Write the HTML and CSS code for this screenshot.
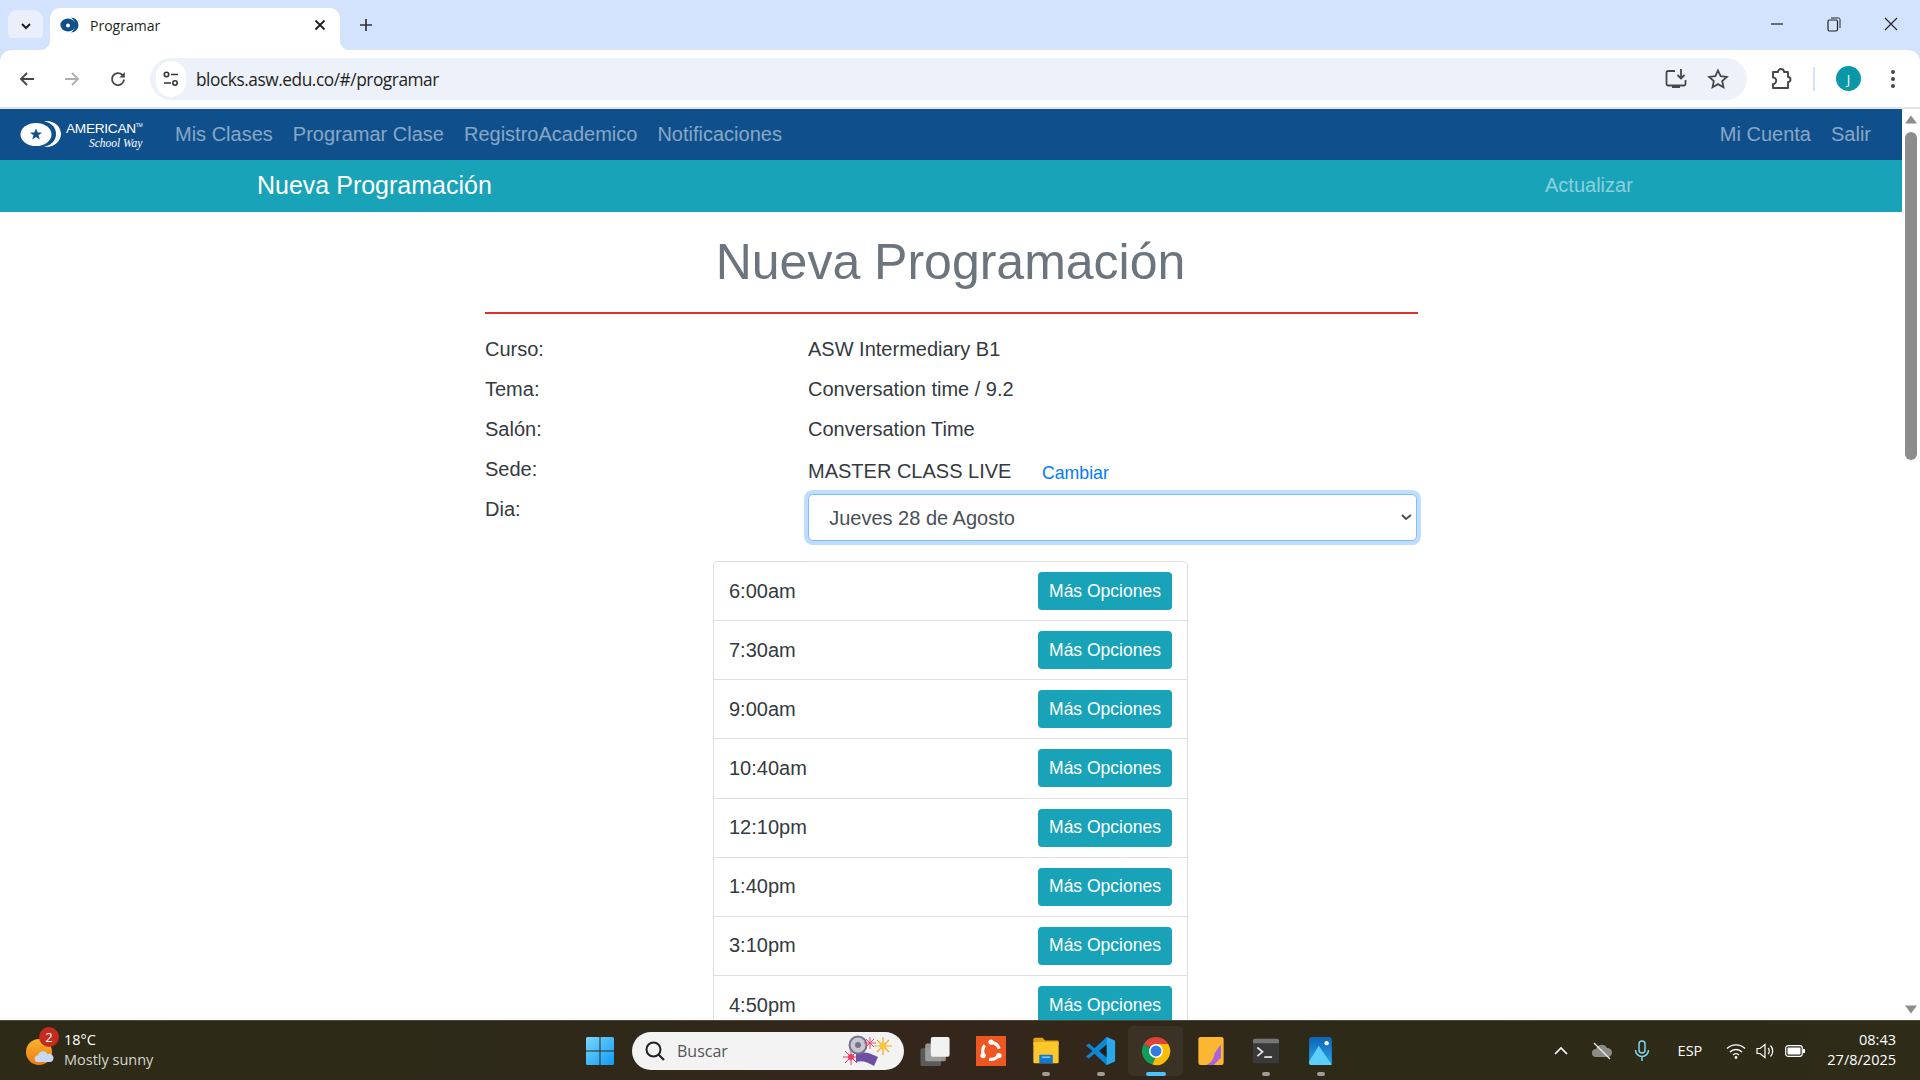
FILE: index.html
```html
<!DOCTYPE html>
<html lang="es">
<head>
<meta charset="utf-8">
<title>Programar</title>
<link rel="stylesheet" href="styles.css">
</head>
<body>
<div class="screen">
  <header class="tabstrip">
    <button class="tabsearch"><svg width="14" height="14" viewBox="0 0 14 14"><path d="M3 5l4 4 4-4" fill="none" stroke="#1f1f1f" stroke-width="2"/></svg></button>
    <div class="tab">
      <svg class="favicon" width="20" height="16" viewBox="0 0 20 16"><path d="M11 .5a7.500 7.500 0 0 1 0 15 9 9 0 0 0 0-15z" fill="#0f4f8c"/><ellipse cx="8" cy="8" rx="7.600" ry="6.400" fill="#0f4f8c"/><circle cx="8" cy="8.400" r="2" fill="#fff"/></svg>
      <span class="tabtitle">Programar</span>
      <svg class="tabclose" width="12" height="12" viewBox="0 0 12 12"><path d="M1.500 1.500l9 9M10.500 1.500l-9 9" stroke="#1f1f1f" stroke-width="1.800"/></svg>
    </div>
    <svg class="newtab" width="14" height="14" viewBox="0 0 14 14"><path d="M7 1v12M1 7h12" stroke="#333" stroke-width="1.700"/></svg>
    <div class="winctrls">
      <svg width="14" height="14" viewBox="0 0 14 14"><path d="M1 7h12" stroke="#222" stroke-width="1.200"/></svg>
      <svg width="14" height="16" viewBox="0 0 14 16"><rect x="1" y="4" width="9.500" height="11" rx="1.500" fill="none" stroke="#222" stroke-width="1.200"/><path d="M4 2h7.500a1.500 1.500 0 0 1 1.500 1.500V12" fill="none" stroke="#222" stroke-width="1"/></svg>
      <svg width="14" height="14" viewBox="0 0 14 14"><path d="M1 1l12 12M13 1L1 13" stroke="#222" stroke-width="1.100"/></svg>
    </div>
  </header>
  <div class="toolbar">
    <svg class="tool-back" width="18" height="18" viewBox="0 0 18 18"><path d="M16 9H3M9 3L3 9l6 6" fill="none" stroke="#474747" stroke-width="1.900"/></svg>
    <svg class="tool-fwd" width="18" height="18" viewBox="0 0 18 18"><path d="M2 9h13M9 3l6 6-6 6" fill="none" stroke="#b0b0b0" stroke-width="1.900"/></svg>
    <svg class="tool-reload" width="18" height="18" viewBox="0 0 18 18"><path d="M15 9.500A6 6 0 1 1 13.200 4.800L15 6.500" fill="none" stroke="#474747" stroke-width="1.900"/><path d="M15.800 2v5.400h-5.400z" fill="#474747"/></svg>
    <div class="omnibox">
      <span class="siteinfo"><svg width="18" height="18" viewBox="0 0 18 18"><circle cx="4.500" cy="4.500" r="2.200" fill="none" stroke="#333" stroke-width="1.600"/><path d="M9 4.500h7M2 13h7" stroke="#333" stroke-width="1.600"/><circle cx="13" cy="13" r="2.200" fill="none" stroke="#333" stroke-width="1.600"/></svg></span>
      <span class="url">blocks.asw.edu.co/#/programar</span>
      <svg class="omni-install" width="24" height="24" viewBox="0 0 24 24"><path d="M11 4H4a1.500 1.500 0 0 0-1.500 1.500V17A1.500 1.500 0 0 0 4 18.500h16a1.500 1.500 0 0 0 1.500-1.500v-4" fill="none" stroke="#474747" stroke-width="1.800"/><path d="M8 21h8v-2.500H8z" fill="#474747"/><path d="M17 2v9M13.500 8l3.500 3.500L20.500 8" fill="none" stroke="#474747" stroke-width="1.800"/></svg>
      <svg class="omni-star" width="22" height="22" viewBox="0 0 22 22"><path d="M11 2.500l2.600 5.700 6.200.7-4.600 4.200 1.300 6.100-5.500-3.100-5.500 3.100 1.300-6.100L2.200 8.900l6.200-.7z" fill="none" stroke="#474747" stroke-width="1.800"/></svg>
    </div>
    <svg class="tool-ext" width="24" height="24" viewBox="0 0 24 24"><path d="M4 5h5a3 3 0 0 1 6 0h4v5a2.500 2.500 0 0 1 0 5v6H4v-4a3 3 0 0 0 0-6.500z" fill="none" stroke="#474747" stroke-width="1.900" stroke-linejoin="round"/></svg>
    <span class="tool-div"></span>
    <span class="avatar">J</span>
    <svg class="tool-menu" width="6" height="20" viewBox="0 0 6 20"><circle cx="3" cy="3" r="2" fill="#474747"/><circle cx="3" cy="10" r="2" fill="#474747"/><circle cx="3" cy="17" r="2" fill="#474747"/></svg>
  </div>

  <div class="viewport">
    <main class="page">
      <nav class="navbar">
        <a class="brand">
          <svg width="42" height="28" viewBox="0 0 42 28"><path d="M24 1c11-1 17 6 17 13s-7 14-17 13c8-2 12-7 12-13S32 3 24 1z" fill="#fff"/><ellipse cx="16" cy="14.500" rx="15.500" ry="11.500" fill="#fff"/><path d="M16 8.500l1.700 4h4.300l-3.500 2.700 1.300 4.300-3.800-2.600-3.800 2.600 1.300-4.300-3.500-2.700h4.300z" fill="#0f4f8c"/></svg>
          <span class="brandtext"><span class="brandtop">AMERICAN<sup>TM</sup></span><span class="brandsub">School Way</span></span>
        </a>
        <a class="navlink">Mis Clases</a>
        <a class="navlink">Programar Clase</a>
        <a class="navlink">RegistroAcademico</a>
        <a class="navlink">Notificaciones</a>
        <span class="spacer"></span>
        <a class="navlink">Mi Cuenta</a>
        <a class="navlink">Salir</a>
      </nav>
      <div class="subbar">
        <span class="subtitle">Nueva Programación</span>
        <a class="sublink">Actualizar</a>
      </div>
      <div class="content">
        <h1 class="heading">Nueva Programación</h1>
        <hr class="rule">
        <div class="form">
          <div class="row"><span>Curso:</span><span>ASW Intermediary B1</span></div>
          <div class="row"><span>Tema:</span><span>Conversation time / 9.2</span></div>
          <div class="row"><span>Salón:</span><span>Conversation Time</span></div>
          <div class="row"><span>Sede:</span><span class="sede">MASTER CLASS LIVE <a class="change">Cambiar</a></span></div>
          <div class="row rowday"><span>Dia:</span>
            <select class="dayselect"><option>Jueves 28 de Agosto</option></select>
          </div>
        </div>
        <ul class="slots">
          <li class="slot"><span>6:00am</span><button class="btn">Más Opciones</button></li>
          <li class="slot"><span>7:30am</span><button class="btn">Más Opciones</button></li>
          <li class="slot"><span>9:00am</span><button class="btn">Más Opciones</button></li>
          <li class="slot"><span>10:40am</span><button class="btn">Más Opciones</button></li>
          <li class="slot"><span>12:10pm</span><button class="btn">Más Opciones</button></li>
          <li class="slot"><span>1:40pm</span><button class="btn">Más Opciones</button></li>
          <li class="slot"><span>3:10pm</span><button class="btn">Más Opciones</button></li>
          <li class="slot"><span>4:50pm</span><button class="btn">Más Opciones</button></li>
        </ul>
      </div>
    </main>
    <aside class="scrollbar">
      <svg width="18" height="12" viewBox="0 0 18 12"><path d="M9 1.500l6 8H3z" fill="#8c8c8c"/></svg>
      <span class="thumb"></span>
      <span class="spacer"></span>
      <svg width="18" height="12" viewBox="0 0 18 12"><path d="M9 10.500l6-8H3z" fill="#8c8c8c"/></svg>
    </aside>
  </div>

  <footer class="taskbar">
    <div class="weather">
      <span class="wicon">
        <svg width="36" height="36" viewBox="0 0 36 36"><defs><linearGradient id="sun" x1="0" y1="0" x2="0" y2="1"><stop offset="0" stop-color="#f7b52c"/><stop offset="1" stop-color="#ef7a12"/></linearGradient></defs><circle cx="15" cy="20" r="13" fill="url(#sun)"/><path d="M13 30a3.500 3.500 0 0 1 1-6.800 5 5 0 0 1 9.500-1 4 4 0 0 1 3.500 7.800z" fill="#c6d9f0"/></svg>
        <span class="wbadge">2</span>
      </span>
      <span class="wtext"><span class="wtemp">18°C</span><span class="wdesc">Mostly sunny</span></span>
    </div>
    <div class="tasks">
      <svg class="winlogo" width="30" height="30" viewBox="0 0 30 30"><defs><linearGradient id="win" x1="0" y1="0" x2="1" y2="1"><stop offset="0" stop-color="#7ad7fd"/><stop offset="1" stop-color="#0f9bf5"/></linearGradient></defs><path d="M1 2.500A1.500 1.500 0 0 1 2.500 1H14.500V14.500H1zM15.500 1H27.500A1.500 1.500 0 0 1 29 2.500V14.500H15.500zM1 15.500H14.500V29H2.500A1.500 1.500 0 0 1 1 27.500zM15.500 15.500H29V27.500A1.500 1.500 0 0 1 27.500 29H15.500z" fill="url(#win)"/></svg>
      <div class="searchbox">
        <svg width="22" height="22" viewBox="0 0 22 22"><circle cx="9.500" cy="9.500" r="7" fill="none" stroke="#222" stroke-width="2"/><path d="M14.500 14.500L20 20" stroke="#222" stroke-width="2.200"/></svg>
        <span class="searchtext">Buscar</span>
        <svg class="searchart" width="60" height="34" viewBox="0 0 60 34"><circle cx="15" cy="23" r="3" fill="#ee3b63"/><path d="M15 15v16M7 23h16M9 17l12 12M21 17L9 29" stroke="#ee3b63" stroke-width="1"/><path d="M20 20c8-3 14-1 22 3l-4 9c-7-4-12-6-18-4z" fill="#6d4fa3"/><circle cx="22" cy="11" r="8.500" fill="#c9c7d2" stroke="#77738c" stroke-width="2"/><circle cx="22" cy="11" r="3" fill="#77738c"/><path d="M47 3v18M38 12h18M41 6l12 12M53 6L41 18" stroke="#f5a623" stroke-width="1.200"/><circle cx="47" cy="12" r="3.500" fill="#f8c537"/><path d="M34 3v12M28 9h12M30 5l8 8M38 5l-8 8" stroke="#ee3b63" stroke-width=".9"/></svg>
      </div>
      <div class="apps">
        <span class="app"><svg width="31" height="30" viewBox="0 0 32 32"><rect x="0" y="13" width="22" height="19" rx="2" fill="#5b5b5b"/><rect x="5" y="8" width="22" height="19" rx="2" fill="#a8a8a8" opacity=".85"/><rect x="11" y="1" width="20" height="21" rx="2" fill="#f2f2f2"/></svg></span>
        <span class="app"><svg width="30" height="30" viewBox="0 0 32 32"><rect width="32" height="32" fill="#ee5722"/><circle cx="16" cy="16" r="9" fill="none" stroke="#fff" stroke-width="3.400" stroke-dasharray="13 5.800" stroke-dashoffset="-3"/><circle cx="16" cy="6.500" r="2.800" fill="#fff"/><circle cx="7.500" cy="20.800" r="2.800" fill="#fff"/><circle cx="24.500" cy="20.800" r="2.800" fill="#fff"/></svg></span>
        <span class="app"><svg width="30" height="27" viewBox="0 0 32 32"><path d="M1 3a2 2 0 0 1 2-2h9l3 3h15a1 1 0 0 1 1 1v4H1z" fill="#e3a417"/><rect x="1" y="6" width="30" height="25" rx="1.500" fill="#fbc72b"/><path d="M9 21h14a1 1 0 0 1 1 1v9H8v-9a1 1 0 0 1 1-1z" fill="#0f78d4"/><rect x="11" y="23" width="10" height="2" fill="#7cc6f2"/></svg><i class="dot"></i></span>
        <span class="app"><svg width="30" height="30" viewBox="0 0 32 32"><path d="M22 1l9 4v22l-9 4L9 19l-6 5-3-2 7-6-7-6 3-2 6 5z" fill="#0e86d4"/><path d="M22 1l9 4v22l-9 4z" fill="#29a9ea"/><path d="M22 9l-8 7 8 7z" fill="#1f1f17"/></svg><i class="dot"></i></span>
        <span class="app app-active"><svg width="30" height="30" viewBox="0 0 32 32"><path d="M16 16L3 8.500A15 15 0 0 1 29 8.500H16z" fill="#db4437"/><path d="M3 8.500A15 15 0 0 0 12 30.500L18 18z" fill="#0f9d58"/><path d="M29 8.500A15 15 0 0 1 12 30.500L18 18 16 8.500z" fill="#fbbc05"/><circle cx="16" cy="16" r="7.500" fill="#fff"/><circle cx="16" cy="16" r="5.800" fill="#2f7de1"/></svg><i class="dot dot-live"></i></span>
        <span class="app"><svg width="28" height="28" viewBox="0 0 28 31"><rect width="28" height="31" rx="2.500" fill="#fbb731"/><path d="M25 8v15l-8 8H9c6-3 8-7 9-13z" fill="#a862e0"/></svg></span>
        <span class="app"><svg width="30" height="26" viewBox="0 0 30 30"><rect y="1" width="30" height="28" rx="2" fill="#3a3a3a"/><path d="M0 3a2 2 0 0 1 2-2h26a2 2 0 0 1 2 2v3H0z" fill="#767676"/><path d="M5 11l6 5-6 5" fill="none" stroke="#e6e6e6" stroke-width="2"/><path d="M13 22h9" stroke="#e6e6e6" stroke-width="2"/></svg><i class="dot"></i></span>
        <span class="app"><svg width="25" height="28" viewBox="0 0 26 32"><defs><linearGradient id="ph" x1="0" y1="0" x2="0" y2="1"><stop offset="0" stop-color="#0e63b6"/><stop offset="1" stop-color="#2aa7ee"/></linearGradient></defs><rect width="26" height="32" rx="3" fill="url(#ph)"/><circle cx="20" cy="7" r="2.500" fill="#fff"/><path d="M0 28L11 10l15 22H3a3 3 0 0 1-3-3z" fill="#5ed0f7"/></svg><i class="dot"></i></span>
      </div>
    </div>
    <div class="tray">
      <svg class="tr-chev" width="16" height="10" viewBox="0 0 16 10"><path d="M2 8l6-6 6 6" fill="none" stroke="#fff" stroke-width="1.700"/></svg>
      <svg class="tr-cloud" width="22" height="18" viewBox="0 0 22 18"><path d="M5 15a4 4 0 0 1 0-8 6 6 0 0 1 11-1 4.500 4.500 0 0 1 1 9z" fill="#8d8d87"/><path d="M3 1l16 16" stroke="#eee" stroke-width="1.200"/></svg>
      <svg class="tr-mic" width="16" height="22" viewBox="0 0 16 22"><rect x="5" y="1" width="6" height="12" rx="3" fill="none" stroke="#7fd4ea" stroke-width="1.500"/><path d="M1.500 10a6.500 6.500 0 0 0 13 0M8 16.500V21" fill="none" stroke="#7fd4ea" stroke-width="1.500"/></svg>
      <span class="tr-lang">ESP</span>
      <svg class="tr-wifi" width="20" height="16" viewBox="0 0 20 16"><path d="M1 5.500a13 13 0 0 1 18 0M4 9a8.500 8.500 0 0 1 12 0M7 12a4 4 0 0 1 6 0" fill="none" stroke="#fff" stroke-width="1.400"/><circle cx="10" cy="14.500" r="1.400" fill="#fff"/></svg>
      <svg class="tr-vol" width="20" height="18" viewBox="0 0 20 18"><path d="M1 6.500h3l5-4v13l-5-4H1z" fill="none" stroke="#fff" stroke-width="1.200"/><path d="M12 6a4 4 0 0 1 0 6M14.500 3.500a8 8 0 0 1 0 11" fill="none" stroke="#fff" stroke-width="1.200"/></svg>
      <svg class="tr-bat" width="20" height="12" viewBox="0 0 20 12"><rect x=".7" y=".7" width="16.600" height="10.600" rx="2.500" fill="none" stroke="#fff" stroke-width="1.200"/><rect x="2.500" y="2.500" width="13" height="7" rx="1" fill="#fff"/><rect x="18" y="4" width="2" height="4" fill="#fff"/></svg>
      <span class="clock"><span>08:43</span><span>27/8/2025</span></span>
    </div>
  </footer>
</div>
</body>
</html>
```

FILE: styles.css
```css
* { box-sizing: border-box; }
html, body { margin: 0; height: 100%; overflow: hidden; }
body { font-family: "Liberation Sans", Arial, sans-serif; color: #343a40; background: #fff; }
svg { display: block; flex: none; }
.screen { display: flex; flex-direction: column; width: 1920px; height: 1080px; overflow: hidden; }
.spacer { flex: 1; }

/* browser tab strip */
.tabstrip { display: flex; align-items: flex-end; height: 50px; flex: none; background: #d3e3fd; padding-left: 8px; }
.tabsearch { width: 35px; height: 32px; margin-bottom: 8px; border: 0; padding: 0; border-radius: 9px; background: #e9f0fc; display: flex; align-items: center; justify-content: center; }
.tab { position: relative; display: flex; align-items: center; width: 290px; height: 42px; margin-left: 7px; padding: 0 14px 8px 10px; background: #fff; border-radius: 10px 10px 0 0; }
.tab::before, .tab::after { content: ""; position: absolute; bottom: 0; width: 10px; height: 10px; }
.tab::before { left: -10px; background: radial-gradient(circle at 0 0, #d3e3fd 10px, #fff 10.5px); }
.tab::after { right: -10px; background: radial-gradient(circle at 100% 0, #d3e3fd 10px, #fff 10.5px); }
.favicon { margin-right: 10px; }
.tabtitle { flex: 1; font: 14px "Open Sans", sans-serif; color: #1f1f1f; }
.newtab { margin: 0 0 18px 19px; }
.winctrls { display: flex; align-items: center; gap: 43px; margin: 0 22px 18px auto; }

/* browser toolbar */
.toolbar { display: flex; align-items: center; height: 59px; flex: none; padding: 0 24px 0 18px; background: #fff; border-bottom: 2px solid #e3e3e3; border-radius: 12px 12px 0 0; box-shadow: 0 -12px 0 #d3e3fd; }
.tool-fwd { margin-left: 27px; }
.tool-reload { margin-left: 28px; }
.omnibox { display: flex; align-items: center; flex: none; width: 1597px; height: 42px; margin-left: 23px; padding: 0 18px 0 6px; border-radius: 21px; background: #edf2fa; }
.siteinfo { display: flex; align-items: center; justify-content: center; width: 30px; height: 36px; border-radius: 18px; background: #fff; }
.url { flex: 1; margin: 2px 0 0 10px; font: 17.300px "Open Sans", sans-serif; letter-spacing: -.45px; color: #1f1f1f; }
.omni-install { margin-right: 1px; }
.omni-star { margin-left: 18px; }
.tool-ext { margin-left: 22px; }
.tool-div { width: 2px; height: 24px; margin-left: 20px; background: #d3e3fd; }
.avatar { display: flex; align-items: center; justify-content: center; width: 25px; height: 25px; margin-left: 21px; border-radius: 50%; background: #0a97a7; color: #fff; font: 13px "Open Sans", sans-serif; }
.tool-menu { margin-left: 29px; }

/* page */
.viewport { display: flex; flex: 1; min-height: 0; }
.page { flex: 1; min-width: 0; overflow: hidden; }
.navbar { display: flex; align-items: center; height: 51px; padding-right: 21px; background: #0f4f8c; }
.brand { display: flex; align-items: center; gap: 4px; width: 165px; padding-left: 20px; }
.brandtext { display: flex; flex-direction: column; align-items: flex-end; color: #fff; line-height: 1; padding-top: 2px; }
.brandtop { font-size: 13.700px; letter-spacing: -.3px; }
.brandtop sup { font-size: 5px; vertical-align: 6px; line-height: 0; }
.brandsub { margin-top: 1px; font: italic 11.500px "Liberation Serif", serif; }
.navlink { padding: 0 10px; font-size: 20px; color: rgba(255, 255, 255, .5); }
.subbar { display: flex; align-items: center; height: 52px; padding: 0 0 1px 257px; background: #18a3b9; }
.subtitle { width: 1288px; font-size: 25px; color: #fff; }
.sublink { font-size: 20px; color: rgba(255, 255, 255, .5); }
.content { width: 933px; margin: 0 0 0 485px; }
.heading { margin: 0; padding: 20px 2px 0 0; height: 100px; text-align: center; font-size: 50px; line-height: 60px; font-weight: 400; color: #6c757d; }
.rule { margin: 0; border: 0; height: 2px; background: #d9312b; }
.form { padding-top: 15px; font-size: 20px; }
.row { display: grid; grid-template-columns: 323px 1fr; height: 40px; line-height: 40px; }
.sede { display: block; padding-top: 2px; }
.change { position: relative; top: 1px; margin-left: 25px; font-size: 17.700px; color: #007bff; }
.rowday { height: 72px; }
.dayselect { zoom: 1.2; width: 507.500px; height: 39px; margin-top: 4.200px; padding: 1px 13.500px 0; font: 16.670px "Liberation Sans", sans-serif; color: #495057; background: #fff; border: 1px solid #80bdff; border-radius: 4px; box-shadow: 0 0 0 3.300px rgba(0, 123, 255, .25); outline: 0; }
.slots { width: 475px; margin: 0 0 0 228px; padding: 0; list-style: none; border: 1px solid #dfdfdf; border-radius: 5px; border-bottom: 0; font-size: 20px; }
.slot { display: flex; align-items: center; justify-content: space-between; height: 59.150px; padding: 0 15px; border-bottom: 1px solid #dfdfdf; }
.btn { width: 134px; height: 38px; padding: 0; border: 0; border-radius: 4px; background: #18a3b9; color: #fff; font: 17.500px "Liberation Sans", sans-serif; }

/* scrollbar */
.scrollbar { display: flex; flex-direction: column; align-items: center; width: 18px; padding: 5px 0; background: #fff; }
.thumb { width: 12px; height: 328px; margin-top: 6px; border-radius: 6px; background: #8c8c8c; }

/* taskbar */
.taskbar { position: relative; display: flex; align-items: center; height: 60px; flex: none; color: #fff; border-top: 1px solid #4a483a; background: linear-gradient(90deg, #2d2b17 0%, #2e2a19 25%, #35261b 50%, #2d2a18 70%, #2e2b18 100%); font-family: "Open Sans", sans-serif; }
.weather { display: flex; align-items: center; width: 585px; padding: 0 0 2px 24px; }
.wicon { position: relative; width: 40px; height: 40px; padding-top: 2px; }
.wbadge { position: absolute; left: 15px; top: -3px; width: 20px; height: 20px; border-radius: 50%; background: #c42b1c; text-align: center; font-size: 13px; line-height: 20px; }
.wtext { display: flex; flex-direction: column; font-size: 14.500px; line-height: 20px; }
.wdesc { color: #d6d6d0; }
.tasks { display: flex; align-items: center; }
.searchbox { display: flex; align-items: center; width: 272px; height: 38px; margin-left: 17px; padding: 0 8px 0 12px; border-radius: 19px; background: #f3f3f3; color: #555; }
.searchtext { flex: 1; margin-left: 11px; font-size: 16px; }
.apps { display: flex; align-items: flex-start; margin-left: 4px; }
.app { position: relative; display: flex; align-items: center; justify-content: center; width: 55px; height: 50px; }
.app-active { background: rgba(255, 255, 255, .05); border-radius: 5px; }
.dot { position: absolute; left: 50%; bottom: 0; width: 8px; height: 4px; margin-left: -4px; border-radius: 2px; background: #9d9d97; }
.dot-live { width: 20px; margin-left: -10px; background: #4cc2ff; }
.tray { position: absolute; right: 24px; top: 0; bottom: 0; display: flex; align-items: center; }
.tr-cloud { margin-left: 22px; }
.tr-mic { margin-left: 21px; }
.tr-lang { margin-left: 28px; font-size: 14.500px; }
.tr-wifi { margin-left: 24px; }
.tr-vol { margin-left: 10px; }
.tr-bat { margin-left: 9px; }
.clock { display: flex; flex-direction: column; align-items: flex-end; margin-left: 22px; padding-bottom: 2px; font-size: 14.500px; line-height: 20px; }
```
